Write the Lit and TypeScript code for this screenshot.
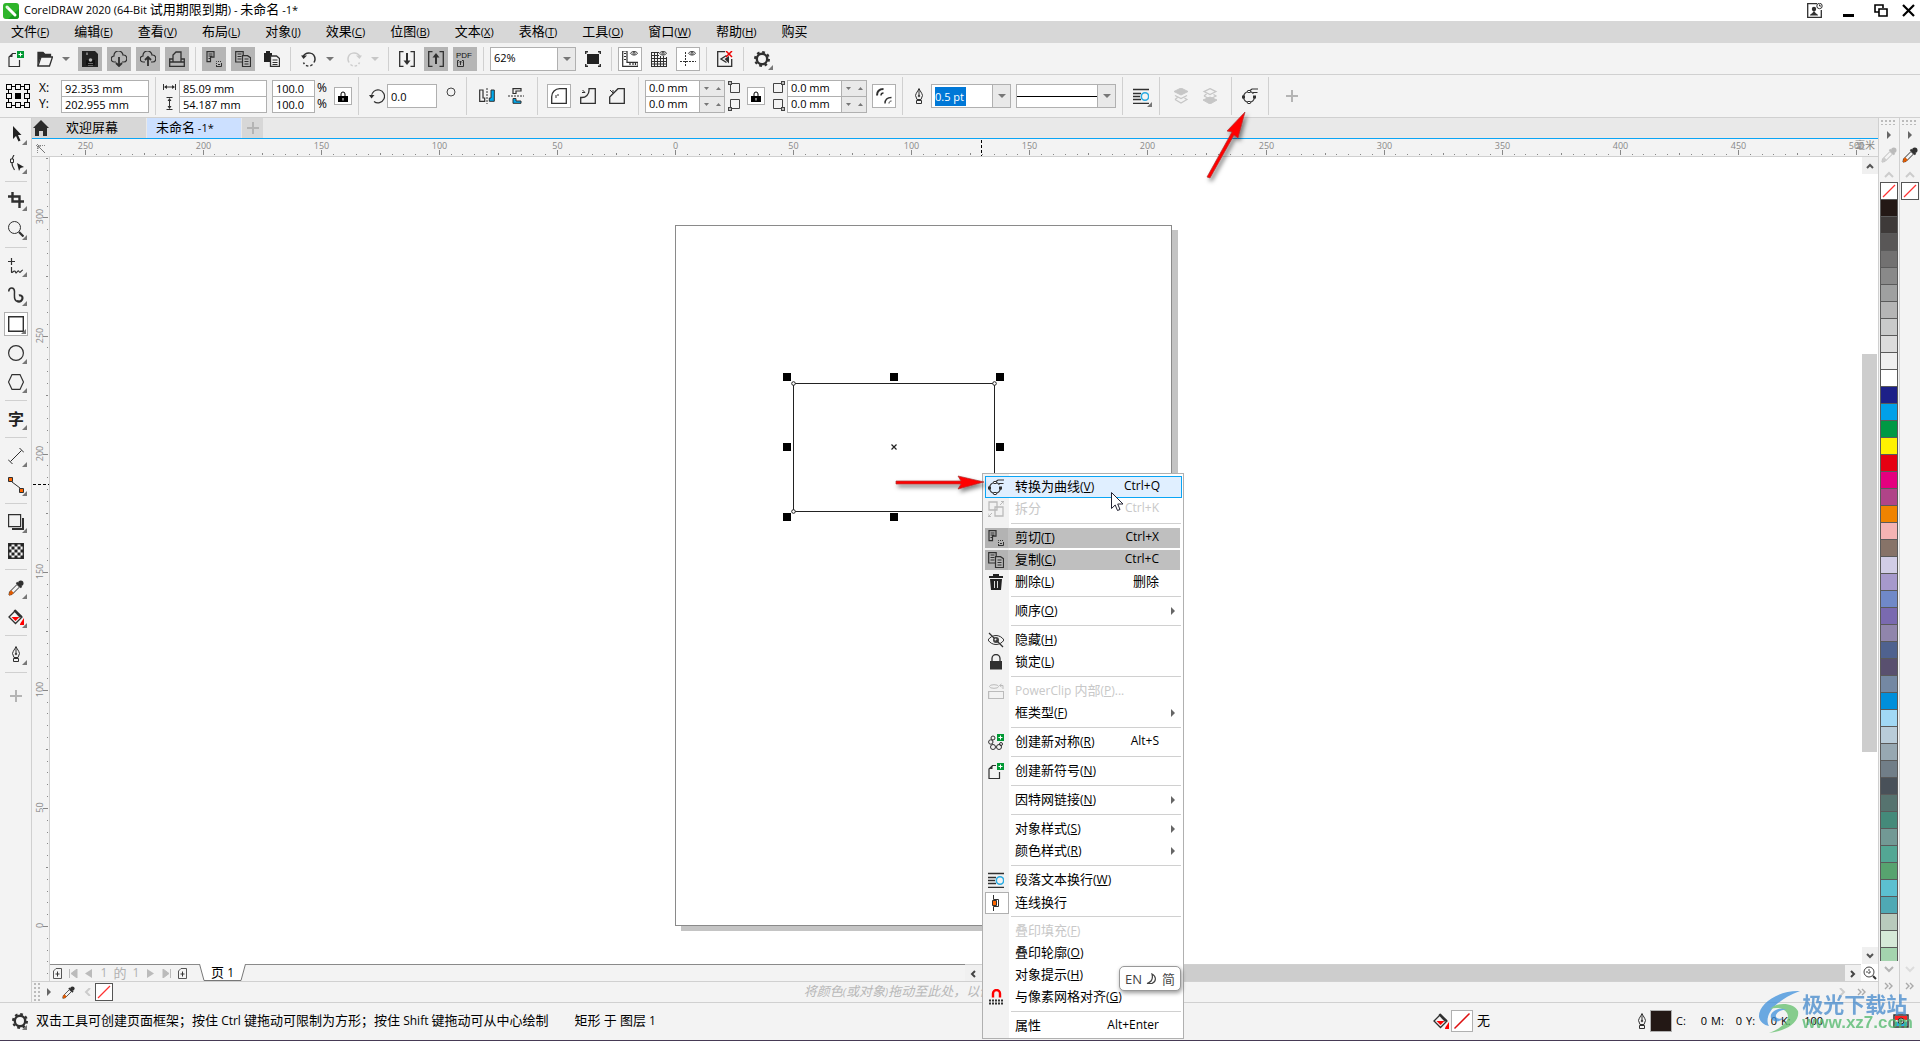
import { LitElement, html, svg, css, nothing } from "lit";
import { customElement } from "lit/decorators.js";
import { classMap } from "lit/directives/class-map.js";
import { styleMap } from "lit/directives/style-map.js";

const INK = "#303030";

/* Splits a caption into Latin and CJK runs; an underscore marks the mnemonic letter. */
const caption = (text: string) =>
  text
    .split(/([\u3000-\u9fff\uff00-\uffef]+|_[A-Z])/)
    .filter((p) => p !== "")
    .map((p) =>
      p[0] === "_"
        ? html`<u>${p.slice(1)}</u>`
        : /[\u3000-\u9fff\uff00-\uffef]/.test(p)
          ? html`<span class="cjk">${p}</span>`
          : p
    );

const draw = (content: unknown, w = 16, h = w) =>
  html`<svg width=${w} height=${h} viewBox="0 0 ${w} ${h}" fill="none" stroke=${INK} aria-hidden="true">${content}</svg>`;

const corner = svg`<path d="M5 0v5H0z" fill="#777" stroke="none"/>`;
const flyout = html`<svg class="flyout" width="5" height="5" viewBox="0 0 5 5" aria-hidden="true">${corner}</svg>`;
const caret = html`<svg width="8" height="4" viewBox="0 0 8 4" aria-hidden="true"><path d="M0 0h8L4 4z" fill="#777"/></svg>`;

const gearPath = svg`<circle cx="8" cy="8" r="5.2" stroke-width="2.4"/><circle cx="8" cy="8" r="7" stroke-width="2" stroke-dasharray="2.75 2.75"/>`;
const penPath = svg`<path d="M8 1v7M8 .5C7 3 5 5 4.500 7.500L6 11.500h4l1.500-4C11 5 9 3 8 .5zM5.500 12.500h5v3h-5z"/><circle cx="8" cy="8" r=".8"/>`;
const curvePath = svg`<circle cx="7" cy="9" r="5.500" stroke-width="1.200" stroke-dasharray="30.200 4.400" stroke-dashoffset="0"/><path d="M8 2.500 10 1h6M11 4.500h4.500" stroke-width="1.200"/><g fill="#fff"><rect x="6" y="2.500" width="2" height="2"/><rect x=".5" y="8" width="2" height="2"/><rect x="6" y="13.500" width="2" height="2"/><rect x="11.500" y="8" width="2" height="2"/></g>`;
const wrapPath = svg`<path d="M0 1.500h16M0 5.500h8M0 8.500h7M0 11.500h8M0 15.500h16" stroke-width="1.400"/><circle cx="12" cy="8.500" r="3.700" stroke="#29abe2" stroke-width="1.600"/>`;
const cutPath = svg`<path d="M1 .7h7v5.500H4.500v4.500H1zM2.500 3h4M2.500 5h4M2.500 7.500h1.500" stroke-width="1.200"/><path d="M10.500 15v-4.500h5" stroke-dasharray="1 1"/><path d="M10 15.500h5.500V12M12 13.500h2"/>`;
const copyPath = svg`<path d="M7 11H.7V.7h7.500V4M2.500 3h4M2.500 5.500h4M2.500 8h4" stroke-width="1.200"/><path d="M7.500 4.700h5l3 2v8.800h-8zM9.500 8h4M9.500 10.500h4M9.500 13h4" stroke-width="1.200"/>`;
const newPath = svg`<path d="M8 2.500H4.500l-3.500 3.500v9.500h10.500V9" stroke-width="1.200"/><path d="M1.500 6h3V2.500z" fill=${INK} stroke="none"/><path d="M9 0h7v7H9z" fill="#093" stroke="none"/><path d="M12.500 1.500v4M10.500 3.500h4" stroke="#fff"/>`;
const dropper = (tip: string, ink: string) => svg`<path d="m9 4.500 2.500 2.500L4 14.500l-3 .500.500-3z" stroke=${ink}/><path d="M1 15.500 1.500 12l1.700-1.700 2.500 2.500L4 14.500z" fill=${tip} stroke="none"/><path d="m8.500 2.500 5 5" stroke=${ink} stroke-width="2"/><circle cx="12.800" cy="3.200" r="2.700" fill=${ink} stroke="none"/>`;
const bucket = svg`<path d="m1 8 6.500-6.500L14 8l-6.500 6.500z" stroke-width="1.300"/><path d="M7 .5 14 7l-2 2-6.500-7z" fill=${INK} stroke="none"/><path d="M3.500 8h8L7.500 12z" fill="#f00" stroke="none"/><path d="M16 9v7h-4c0-2 1.500-3 4-7z" fill="#f00" stroke="none"/>`;
const lockPath = svg`<path d="M4 7V4.500a4 4 0 0 1 8 0V7" stroke-width="1.300"/><path d="M2 7h12v8.500H2z" fill=${INK} stroke="none"/>`;
const cloud = svg`<path d="M5 11H3.500a3 3 0 0 1-.5-6 4.500 4.500 0 0 1 9-1 3.500 3.500 0 0 1 .5 7H11" stroke-width="1.200"/>`;
const eye = svg`<path d="M.5 2.500C2.500-.2 6.500-.2 8.500 2.500 6.500 5.200 2.500 5.200.5 2.500z" stroke-width="1"/><circle cx="4.500" cy="2.500" r="1.200"/>`;
const plusPath = svg`<path d="M6 0v12M0 6h12" stroke="#b4b4b4" stroke-width="2"/>`;
const padlock = svg`<path d="M3 6V4a2 2 0 0 1 4 0v2" stroke="#000"/><path d="M0 6h10v6H0z" fill="#000" stroke="none"/><path d="M4.500 8h1v2.500h-1z" fill="#fff" stroke="none"/>`;

const icons: Record<string, unknown> = {
  new: draw(newPath),
  open: draw(svg`<path d="M1 15V1.500h5l2 2h5.500V6" stroke-width="1.300"/><path d="M1 1h5l2 2.500h6V6H4L1 12z" fill=${INK} stroke="none"/><path d="M4 6h11.500L12.500 15H1z" fill="#f3f3f3" stroke-width="1.300"/>`),
  save: draw(svg`<path d="M0 0h13l3 3v13H0z" fill="#222" stroke="none"/><path d="M5 1.500v2.500" stroke="#ccc"/><path d="M4 9h9v5H4z" fill="#111" stroke="none"/><circle cx="8.500" cy="9" r="1.800" fill="#b5b5b5" stroke="none"/><path d="M6 12.500h5M6 14.500h5" stroke="#666"/>`),
  cloudDown: draw(svg`${cloud}<path d="M8 6v9M5 12l3 3 3-3" stroke-width="1.800"/>`),
  cloudUp: draw(svg`${cloud}<path d="M8 15V6M5 9l3-3 3 3" stroke-width="1.800"/>`),
  print: draw(svg`<path d="M4 11V4l3-3h5v10M4 8H.7v7.300h14.600V8H12M.7 11h14.600" stroke-width="1.300"/>`),
  cut: draw(cutPath),
  copy: draw(copyPath),
  paste: draw(svg`<path d="M0 2h2V0h4v2h2v9H0z" fill="#222" stroke="none"/><path d="M6.500 5h6l3 2.500v8h-9z" fill="#f3f3f3" stroke-width="1.300"/><path d="M8.500 9h5M8.500 11.500h5M8.500 13.500h5"/>`),
  undo: draw(svg`<path d="M2 5.500C5 .5 14 .5 14 8.500c0 1-.5 2-1 3" stroke-width="1.500"/><path d="M11.500 13.500C8 16.500 4 15 2.500 11.500" stroke-width="1.500" stroke-dasharray="2.500 2"/><path d="M0 4.500h6L2.500 8z" fill=${INK} stroke="none"/>`),
  redo: draw(svg`<g stroke="#ccc"><path d="M14 5.500C11 .5 2 .5 2 8.500c0 1 .5 2 1 3" stroke-width="1.500"/><path d="M4.500 13.500C8 16.500 12 15 13.500 11.500" stroke-width="1.500" stroke-dasharray="2.500 2"/><path d="M16 4.500h-6L13.500 8z" fill="#ccc" stroke="none"/></g>`),
  import: draw(svg`<path d="M4.500.7H.7v14.600h3.800M11.500.7h3.800v14.600h-3.800" stroke-width="1.300"/><path d="M8 2v10" stroke-width="2"/><path d="M4.500 9.500h7L8 14z" fill=${INK} stroke="none"/>`),
  export: draw(svg`<path d="M4.500.7H.7v14.600h3.800M11.500.7h3.800v14.600h-3.800" stroke-width="1.300"/><path d="M8 4v9" stroke-width="2"/><path d="M4.500 6.500h7L8 2z" fill=${INK} stroke="none"/>`),
  screen: draw(svg`<path d="M3 .7H.7V3M13 .7h2.300V3M3 15.300H.7V13M13 15.300h2.300V13" stroke-width="1.400"/><path d="M2 3h12v10H2z" fill="#222" stroke="none"/>`),
  rulers: draw(svg`<path d="M.7 0v15.300H16v-4H5V0zM2 2.500h2M2 5.500h2M2 8.500h2M8 12v2M11 12v2M13.500 12v2" stroke-width="1.200"/><g transform="translate(8 0) scale(.9)">${eye}</g>`),
  grid: draw(svg`<path d="M.5 1v14.500M3.500 1v14.500M6.500 1v14.500M9.500 5v10.500M12.500 5v10.500M15.500 6v9.500M0 1.500h8M0 4.500h8M0 7.500h16M0 10.500h16M0 13h16M0 15.500h16"/><g transform="translate(8 0) scale(.9)">${eye}</g>`),
  guides: draw(svg`<path d="M5.500 1v15" stroke-dasharray="2 1"/><path d="M0 10.500h16" stroke-dasharray="2 1"/><g transform="translate(8 0) scale(.9)">${eye}</g>`),
  snap: draw(svg`<path d="M8 .7H.7v14.600h14V8" stroke-width="1.300"/><path d="M9.500 4.500 4 8l5.500 3.500"  stroke-width="1.400"/><path d="M7.500 8 12 5v7.500z" fill=${INK} stroke="none"/><path d="m9 0 6 6M15 0 9 6" stroke="#e00" stroke-width="1.500"/>`),
  gear: draw(gearPath),
  pick: draw(svg`<path d="M5 0v13l3-3 2.500 5.500 2-1L10 9h3.500z" fill="#222" stroke="none"/>`),
  shape: draw(svg`<path d="M6 0C3 4 3 10 6.500 15" stroke-width="1.200"/><path d="M2.500 4h3v3.500h-3z" fill="#f3f3f3"/><path d="m9 8 7 4-3.500 1-1.500 3z" fill="#222" stroke="none"/>`),
  crop: draw(svg`<path d="M4.500 0v9.500H16M0 4.500h11.500V16" stroke-width="2.400"/>`),
  zoom: draw(svg`<circle cx="6.500" cy="6.500" r="6"/><path d="m11 11 4.500 4.500" stroke-width="2.200"/>`),
  freehand: draw(svg`<path d="M3.500 0v7M0 3.500h7M3.500 9v5c0 2 3-3 4 0s2-3 3.500-.5 2-1.500 4-1.500" stroke-width="1.200"/>`),
  media: draw(svg`<path d="M.7 4.500C1-.5 6.500 0 6.500 4.500S5.500 14.500 10.500 14.500" stroke-width="1.500"/><path d="M9 14c3 1.500 5.500-.5 5.500-3S12 8 11 8.500" stroke-width="2.200"/>`),
  rect: draw(svg`<path d="M.7.7h14.600v14.600H.7z" stroke-width="1.400"/>`),
  ellipse: draw(svg`<circle cx="8" cy="8" r="7.400" stroke-width="1.200"/>`),
  polygon: draw(svg`<path d="M4 .6h8L15.500 8 12 15.400H4L.5 8z" stroke-width="1.200"/>`),
  line: draw(svg`<path d="M2.500 13.500l11-11M0 11.500l4.500 4.500M11.500 0l4.500 4.500"/>`),
  connector: draw(svg`<path d="m4 5 8 6" /><path d="M.5.5h4v4h-4zM11.500 11.500h4v4h-4z" fill="#f60" stroke-width="1"/>`),
  shadow: draw(svg`<path d="M.6.6h12v12H.6z" stroke-width="1.200"/><path d="M15 4v11H4" stroke-width="2"/>`),
  checker: draw(svg`<path d="M.7.7h14.600v14.600H.7z" stroke-width="1.400"/>${[0, 1, 2, 3, 4].flatMap((r) => [0, 1, 2, 3, 4].filter((c) => (r + c) % 2 === 0).map((c) => svg`<rect x=${0.5 + c * 3} y=${0.5 + r * 3} width="3" height="3" fill="#222" stroke="none"/>`))}`),
  dropper: draw(dropper("#e05a00", INK)),
  dropperPale: draw(dropper("#ccc", "#bbb")),
  dropperSmall: html`<svg width="13" height="13" viewBox="0 0 16 16" fill="none" aria-hidden="true">${dropper("#e05a00", INK)}</svg>`,
  bucket: draw(bucket),
  pen: draw(penPath),
  plus: draw(plusPath, 12),
  origin: draw(svg`<path d="M2.500 2.500h19v19h-19z" stroke="#000"/>${[0, 9, 18].flatMap((y) => [0, 9, 18].map((x) => svg`<rect x=${x + 0.5} y=${y + 0.5} width="5" height="5" fill=${x === 9 && y === 9 ? "#000" : "#f3f3f3"} stroke="#000"/>`))}`, 24),
  widthDim: draw(svg`<path d="M.5 1v6M12.500 1v6M2 4h9"/><path d="M1 4l3-2v4zM12 4 9 2v4z" fill=${INK} stroke="none"/>`, 13, 8),
  heightDim: draw(svg`<path d="M3.500.5h6M3.500 12.500h6M6.500 2v9"/><path d="m6.500 1 2 3h-4zM6.500 12l2-3h-4z" fill=${INK} stroke="none"/>`, 13),
  lock: draw(padlock, 10, 12),
  rotate: draw(svg`<path d="M2.500 8.500a6.500 6.500 0 1 1 2.500 5" stroke-width="1.200"/><path d="M0 7h5.500L2.500 10.500z" fill=${INK} stroke="none"/>`),
  degree: draw(svg`<circle cx="5" cy="5" r="4" stroke="#444"/>`, 10),
  mirrorH: draw(svg`<path d="M.7 2v11.300h5V10H4V2z" stroke-width="1.200"/><path d="M8 0v16" stroke-dasharray="2 1"/><path d="M15.300 2v11.300h-5V10H12V2z" fill="#0ae" stroke-width="1"/>`),
  mirrorV: draw(svg`<path d="M5 5.500V.7h8V3H8v2.500z" stroke-width="1.200"/><path d="M0 8h16" stroke-dasharray="2 1"/><path d="M5 10.500v4.800h8V13H8v-2.500z" fill="#0ae" stroke-width="1"/>`),
  round: draw(svg`<path d="M.7 15.300V9A8 8 0 0 1 9 .7h6.300v14.600z" stroke-width="1.300"/><path d="M5 10V7h3" stroke-dasharray="3 1"/>`),
  scallop: draw(svg`<path d="M.7 15.300V9.500H2A7 7 0 0 0 9 2.500V.7h6.300v14.600z" stroke-width="1.300"/><path d="M2 4.500h3L2.500 2"/>`),
  chamfer: draw(svg`<path d="M.7 15.300V9L9 .7h6.300v14.600z" stroke-width="1.300"/><path d="m1 2 3 3V2"/>`),
  relative: draw(svg`<path d="M1 7.500C1 3 3 1 7.500 1" stroke-width="2"/><path d="M5 7.500C5 6 6 5 7.500 5M9 15.500C9 11 11 9.500 15.500 9.500" stroke-width="1.400"/><path d="M13 15.500c0-1.500 1-2.500 2.500-2.500"/>`),
  wrap: draw(wrapPath),
  toFront: draw(svg`<g stroke="#c6c6c6"><path d="M8 0l7 3.500L8 7 1 3.500z" fill="#c6c6c6"/><path d="m2 7.500 6 3 6-3M2 11.500l6 3.500 6-3.500-2.500-1.500M4.500 9.500 2 11.500" stroke-width="1.200"/></g>`),
  toBack: draw(svg`<g stroke="#c6c6c6"><path d="M8 9l7 3-7 4-7-4z" fill="#c6c6c6"/><path d="M8 .6l6 3-6 3-6-3zM2 8l6 3 6-3-2.500-1.500M4.500 6 2 8" stroke-width="1.200"/></g>`),
  curve: draw(curvePath),
  split: draw(svg`<g stroke="#bbb"><path d="M1 1h8v8H1zM7 6h8v9H7z" stroke-width="1.300"/><path d="M12 4l4-4M13 .500h3v3M4 12l-4 4M3 15.500H0v-3"/></g>`),
  trash: draw(svg`<path d="M1 2h4V0h6v2h4v2H1zM2 5h12l-1 11H3z" fill="#222" stroke="none"/><path d="M6.500 7v7M9.500 7v7" stroke="#ddd"/>`),
  hide: draw(svg`<path d="M0 8c4-6 12-6 16 0-4 6-12 6-16 0z"/><circle cx="8" cy="8" r="3" fill="#444" stroke="none"/><path d="m1 1 14 14" stroke-width="1.200"/><circle cx="7.500" cy="7.500" r="1" fill="#eee" stroke="none"/>`),
  padlock: draw(lockPath),
  clip: draw(svg`<g stroke="#bbb"><path d="M.6 8.500h15v7H.6z" stroke-width="1.200"/><ellipse cx="6" cy="3.500" rx="4.500" ry="1.800"/><path d="M12 2.500h3V6M13.500 1l-2 1.500 2 1.500"/></g>`),
  symmetry: draw(svg`<g><circle cx="5" cy="4" r="2"/><circle cx="2.800" cy="8" r="2.200"/><circle cx="5" cy="13" r="2.500"/><circle cx="11" cy="13" r="2.500"/><circle cx="13" cy="10" r="1.500"/></g><path d="M9 0h7v7H9z" fill="#093" stroke="none"/><path d="M12.500 1.500v4M10.500 3.500h4" stroke="#fff"/>`),
  connWrap: draw(svg`<path d="M5.500 0v4.500h5v7h-5V16"/><path d="M4.500 5.500h4v5h-4z" fill="#f60"/>`),
  magnet: draw(svg`<path d="M5 8.500V4.500a3.500 3.500 0 0 1 7 0v4" stroke="#f00" stroke-width="2.400"/><path d="M1 11.500h14M1 14.500h14" stroke-width="2" stroke-dasharray="2 1"/>`),
  home: draw(svg`<path d="M8 0l8 8h-2v8h-4v-5H6v5H2V8H0z" fill="#2b2b2b" stroke="none"/>`),
  chevUp: draw(svg`<path d="m1 6 4-4 4 4" stroke="#ccc" stroke-width="2"/>`, 10, 8),
  chevDown: draw(svg`<path d="m1 2 4 4 4-4" stroke="#b4b4b4" stroke-width="2"/>`, 10, 8),
  scrollUp: draw(svg`<path d="m1 6 3-3 3 3" stroke="#555" stroke-width="2"/>`, 8),
  scrollDown: draw(svg`<path d="m1 2 3 3 3-3" stroke="#555" stroke-width="2"/>`, 8),
  scrollLeft: draw(svg`<path d="m6 1-3 3 3 3" stroke="#444" stroke-width="2"/>`, 8),
  scrollRight: draw(svg`<path d="m2 1 3 3-3 3" stroke="#444" stroke-width="2"/>`, 8),
  leftPale: draw(svg`<path d="m6 0-4 4 4 4" stroke="#ccc" stroke-width="2"/>`, 8),
  rightPale: draw(svg`<path d="m2 0 4 4-4 4" stroke="#ccc" stroke-width="2"/>`, 8),
  more: draw(svg`<path d="m1 1 3 3-3 3M5 1l3 3-3 3" stroke="#aaa" stroke-width="1.400"/>`, 10, 8),
  play: draw(svg`<path d="M0 0l4 4-4 4z" fill="#666" stroke="none"/>`, 4, 8),
  navigator: draw(svg`<circle cx="6" cy="6" r="5" stroke="#444"/><path d="m10 10 3 3" stroke="#333" stroke-width="2"/><path d="M3 6h6M6 3v6" stroke="#444" stroke-dasharray="2 1"/>`, 14),
  rulerOrigin: draw(svg`<path d="M0 1.500h9M1.500 0v9" stroke="#888" stroke-dasharray="1 1"/><path d="m2 2 7 7M2 5V2h3" stroke="#777"/>`, 10),
  addPage: draw(svg`<path d="M3 .5h5.500v10h-8V3z" stroke="#555"/><path d="M4.500 3.500v5M2.500 6h4" stroke="#333"/>`, 9, 11),
  first: draw(svg`<path d="M.5 0v9M8 0v9L2 4.500z" fill="#bbb" stroke="#bbb"/>`, 9),
  prev: draw(svg`<path d="M7 0v9L0 4.500z" fill="#bbb" stroke="none"/>`, 8, 9),
  next: draw(svg`<path d="M0 0v9l7-4.500z" fill="#bbb" stroke="none"/>`, 8, 9),
  last: draw(svg`<path d="M8.500 0v9M1 0v9l6-4.500z" fill="#bbb" stroke="#bbb"/>`, 9),
  account: draw(svg`<path d="M10 .7H.7v13.600h13.600V7" stroke-width="1.300"/><circle cx="7" cy="6" r="2.200" fill=${INK} stroke="none"/><path d="M3 12.500c0-2 3-1.500 3-4h2c0 2.500 3 2 3 4z" fill=${INK} stroke="none"/><circle cx="12.500" cy="3" r="2.700" fill="#fff"/><path d="M12.500 1.500V3H14"/>`),
  minimize: draw(svg`<path d="M0 12.500h11" stroke="#000" stroke-width="3"/>`, 11, 16),
  restore: draw(svg`<path d="M5 8H1V1h8v3M5 5h8v7H5z" stroke="#000" stroke-width="1.600"/>`, 14, 13),
  close: draw(svg`<path d="M1 1l11 11M12 1 1 12" stroke="#000" stroke-width="2.200"/>`, 13),
  proof: draw(svg`<path d="M1 1h14v12H1z" fill="#fff" stroke-width="1.500"/><path d="M2 2h12v4H2z" fill="#f22" stroke="none"/><path d="M2 8h12v4H2z" fill="#29abe2" stroke="none"/><circle cx="8" cy="7" r="3" fill="#ccc"/><circle cx="8" cy="7" r="1"/>`, 16, 14),
};

const cornerIcon = (x: number, y: number) =>
  draw(svg`<path d="M2.500 2.500h9v9h-9z" stroke="#444"/><rect x=${x} y=${y} width="3" height="3" fill="#bbb" stroke="#444"/>`, 14);

const menus = ["文件(_F)", "编辑(_E)", "查看(_V)", "布局(_L)", "对象(_J)", "效果(_C)", "位图(_B)", "文本(_X)", "表格(_T)", "工具(_O)", "窗口(_W)", "帮助(_H)", "购买"];

type Tool = { icon: string; label: string; on?: boolean; fly?: boolean } | "-";
const tools: Tool[] = [
  { icon: "pick", label: "选择", fly: true }, { icon: "shape", label: "形状", fly: true }, "-",
  { icon: "crop", label: "裁剪", fly: true }, { icon: "zoom", label: "缩放", fly: true }, "-",
  { icon: "freehand", label: "手绘", fly: true }, { icon: "media", label: "艺术笔", fly: true },
  { icon: "rect", label: "矩形", on: true, fly: true }, { icon: "ellipse", label: "椭圆形", fly: true }, { icon: "polygon", label: "多边形", fly: true }, "-",
  { icon: "text", label: "文本", fly: true }, "-",
  { icon: "line", label: "平行度量", fly: true }, { icon: "connector", label: "连接器", fly: true }, "-",
  { icon: "shadow", label: "阴影", fly: true }, { icon: "checker", label: "透明度" }, "-",
  { icon: "dropper", label: "颜色滴管", fly: true }, { icon: "bucket", label: "交互式填充", fly: true }, "-",
  { icon: "pen", label: "轮廓笔", fly: true }, "-",
];

type Item = { text: string; key?: string; icon?: string; sub?: boolean; state?: "hot" | "off" | "dim" | "boxed" } | "-";
const contextItems: Item[] = [
  { text: "转换为曲线(_V)", key: "Ctrl+Q", icon: "curve", state: "hot" },
  { text: "拆分", key: "Ctrl+K", icon: "split", state: "off" }, "-",
  { text: "剪切(_T)", key: "Ctrl+X", icon: "cut", state: "dim" },
  { text: "复制(_C)", key: "Ctrl+C", icon: "copy", state: "dim" },
  { text: "删除(_L)", key: "删除", icon: "trash" }, "-",
  { text: "顺序(_O)", sub: true }, "-",
  { text: "隐藏(_H)", icon: "hide" },
  { text: "锁定(_L)", icon: "padlock" }, "-",
  { text: "PowerClip 内部(_P)...", icon: "clip", state: "off" },
  { text: "框类型(_F)", sub: true }, "-",
  { text: "创建新对称(_R)", key: "Alt+S", icon: "symmetry" }, "-",
  { text: "创建新符号(_N)", icon: "new" }, "-",
  { text: "因特网链接(_N)", sub: true }, "-",
  { text: "对象样式(_S)", sub: true },
  { text: "颜色样式(_R)", sub: true }, "-",
  { text: "段落文本换行(_W)", icon: "wrap" },
  { text: "连线换行", icon: "connWrap", state: "boxed" }, "-",
  { text: "叠印填充(_F)", state: "off" },
  { text: "叠印轮廓(_O)" },
  { text: "对象提示(_H)" },
  { text: "与像素网格对齐(_G)", icon: "magnet" }, "-",
  { text: "属性", key: "Alt+Enter" },
];

const swatches = ["#231815", "#3e3a39", "#595757", "#727171", "#898989", "#9fa0a0", "#b5b5b5", "#c9caca", "#dcdcdc", "#efefef", "#ffffff", "#1d2088", "#00a0e9", "#009944", "#fff100", "#e60012", "#e4007f", "#b04488", "#f08300", "#f4b3b3", "#877368", "#d1cde6", "#a699cc", "#7089c8", "#7a6ab0", "#9085ac", "#4f628f", "#59506f", "#7488a3", "#008fdb", "#a1d8f5", "#b9ccd9", "#97a8b2", "#717e88", "#495159", "#56736f", "#448a7a", "#729995", "#53a794", "#57a36f", "#5cc0d0", "#4fa9b4", "#b8cabc", "#d6e9d8", "#a4d4ae"];

const inks: [string, string][] = [["C:", "0"], ["M:", "0"], ["Y:", "0"], ["K:", "100"]];

const PX_PER_MM = 2.362;
const range = (from: number, to: number, step: number) =>
  Array.from({ length: Math.floor((to - from) / step) + 1 }, (_, i) => from + i * step);

@customElement("app-root")
export class AppRoot extends LitElement {
  static styles = css`
    :host { display: block; --line: #d0d0d0; --box: #b0b0b0; --face: #f3f3f3; }
    * { box-sizing: border-box; }
    button, input, select { font: inherit; color: inherit; border: 0; padding: 0; margin: 0; background: none; border-radius: 0; outline: none; }
    button { display: flex; align-items: center; justify-content: center; }
    select { appearance: none; }
    svg { display: block; flex: none; }
    u { text-underline-offset: 1px; }
    .cjk { font-size: 13px; }
    .app { position: relative; display: flex; flex-direction: column; height: 100vh; overflow: hidden; background: var(--face); color: #000; font: 11px/16px "Open Sans", "Noto Sans CJK SC", sans-serif; white-space: nowrap; }
    .title { display: flex; align-items: center; height: 21px; padding: 0 5px 0 3px; background: #fff; gap: 5px; }
    .title h1 { flex: 1; margin: 0; padding-bottom: 2px; font: inherit; }
    .winbtns { display: flex; gap: 14px; align-items: center; }
    .winbtns .lone { padding-right: 6px; }
    .menubar { display: flex; height: 22px; background: #d7d7d7; }
    .menubar button { padding: 0 14px 2px 11px; }
    .bar { display: flex; align-items: center; gap: 5px; border-bottom: 1px solid var(--line); }
    .main { height: 32px; padding-left: 4px; }
    .props { height: 43px; padding-left: 6px; }
    .ib { position: relative; width: 24px; height: 24px; flex: none; }
    .dark { background: #b5b5b5; }
    .boxed { background: #fff; border: 1px solid var(--box); }
    .flyout { position: absolute; right: 1px; bottom: 1px; }
    .drop { width: 11px; height: 24px; justify-content: flex-start; }
    .pale { opacity: .35; }
    .vsep { width: 3px; height: 24px; flex: none; padding: 0 1px; background: var(--line); background-clip: content-box; }
    .props .vsep { height: 38px; }
    .combo { display: flex; height: 24px; border: 1px solid var(--box); background: #fff; align-items: center; }
    .combo .well { display: flex; align-items: center; justify-content: center; width: 18px; height: 22px; border-left: 1px solid var(--box); background: #e9e9e9; }
    .combo .grow { flex: 1; min-width: 0; }
    .combo select { padding: 0 0 2px 3px; height: 22px; }
    .zoomc { width: 86px; }
    .widthc { width: 80px; }
    .linec { width: 100px; }
    .picked { width: 31px; height: 19px; margin-left: 3px; background: #0078d7; color: #fff; }
    .fill { flex: 1; }
    .rule { flex: 1; height: 1px; background: #000; }
    .group { display: flex; align-items: center; gap: 2px; }
    .btns { display: flex; gap: 5px; padding: 0 3px; }
    .btns.tight { padding-left: 2px; }
    .stack { display: flex; flex-direction: column; }
    .stack input { width: 88px; height: 17px; border: 1px solid var(--box); background: #fff; padding: 0 3px; }
    .stack input + input, .stack .spin + .spin { margin-top: -1px; }
    .stack .pct { width: 43px; }
    .labels { width: 21px; padding-left: 4px; font-size: 12px; }
    .unit { width: 12px; font-size: 12px; }
    .icons { width: 15px; align-items: center; gap: 2px; justify-content: center; }
    .icons.dims { gap: 6px; }
    .spin { display: flex; width: 80px; height: 17px; border: 1px solid var(--box); background: #e9e9e9; }
    .stack .spin input { width: 54px; height: 15px; border: 0; border-right: 1px solid var(--box); }
    .spin button { width: 12px; }
    .lock { width: 18px; height: 18px; flex: none; }
    .angle { width: 50px; height: 24px; background: #fff; border: 1px solid var(--box); padding: 0 3px; }
    .lead { width: 20px; display: flex; justify-content: flex-end; }
    .lead.mid { justify-content: center; }
    .degree { width: 18px; height: 18px; display: flex; justify-content: center; }
    .wide { width: 34px; }
    .body { flex: 1; min-height: 0; display: grid; grid-template-columns: 32px minmax(0, 1fr) 21px 21px; border-bottom: 1px solid var(--line); }
    .toolbox { display: flex; flex-direction: column; gap: 5px; padding: 4px 0 0 4px; border-right: 1px solid var(--line); min-height: 0; overflow: hidden; }
    .hsep { width: 22px; height: 3px; flex: none; margin-left: 1px; padding: 1px 0; background: var(--line); background-clip: content-box; }
    .glyph { font: 700 16px/20px "Noto Sans CJK SC", sans-serif; color: #222; padding-bottom: 2px; }
    .add { width: 24px; height: 34px; }
    .doc { display: flex; flex-direction: column; min-height: 0; }
    .tabs { display: flex; height: 21px; background: #e9e9e9; border-bottom: 1px solid #0ba5f5; gap: 1px; }
    .tab { padding: 0; background: #d7d7d7; }
    .tab span { padding-bottom: 2px; }
    .tab.first { width: 114px; justify-content: flex-start; gap: 17px; padding-left: 1px; }
    .tab.current { width: 94px; background: #cce0ff; justify-content: flex-start; padding-left: 9px; }
    .tab.more { width: 21px; }
    .hrow { display: flex; height: 18px; border-bottom: 1px solid var(--line); }
    .origin { width: 18px; flex: none; padding: 5px 0 0 4px; }
    .ruler { flex: 1; min-width: 0; overflow: hidden; font-size: 9px; }
    .below { flex: 1; min-height: 0; display: flex; }
    .vruler { width: 18px; border-right: 1px solid var(--line); overflow: hidden; font-size: 9px; min-height: 0; }
    .work { flex: 1; min-width: 0; display: flex; flex-direction: column; }
    .view { flex: 1; min-height: 0; display: flex; background: #fff; }
    .canvas { flex: 1; min-width: 0; overflow: hidden; }
    .vscroll { width: 16px; display: flex; flex-direction: column; }
    .sbtn { width: 16px; height: 17px; flex: none; background: #f0f0f0; }
    .track { flex: 1; display: flex; flex-direction: column; padding-right: 1px; }
    .s180 { flex: 180; } .s195 { flex: 195; }
    .thumb { flex: 398; background: #cdcdcd; }
    .pages { display: flex; height: 17px; }
    .pagenav { flex: 914; display: flex; align-items: center; gap: 7px; padding-left: 3px; border-top: 1px solid #8a8a8a; color: #b0b0b0; font-size: 12px; }
    .count { display: flex; justify-content: center; gap: 6px; width: 40px; }
    .ptab { position: relative; width: 47px; height: 17px; color: #000; align-self: flex-end; margin-left: 5px; }
    .ptab svg { position: absolute; left: 0; top: 0; }
    .ptab span { position: relative; padding-bottom: 1px; }
    .hscroll { flex: 897; display: flex; border-top: 1px solid var(--line); }
    .hthumb { flex: 1; background: #cdcdcd; margin-left: 4px; }
    .navzoom { width: 17px; background: #fff; }
    .docpal { display: flex; align-items: center; height: 21px; border-top: 1px solid var(--line); padding: 0 6px 0 2px; }
    .dots { width: 7px; height: 18px; flex: none; background: radial-gradient(circle at 1px 1px, #bbb 1px, transparent 1px) 0 0 / 4px 4px; }
    .dots.flat { width: 16px; height: 5px; margin: 2px 0 2px 1px; }
    .docpal button { width: 20px; height: 20px; }
    .docpal .slim { width: 15px; }
    .docpal .wider { width: 24px; }
    .docpal .none { width: 18px; height: 18px; }
    .hint { flex: 1; text-align: center; font-style: italic; color: #b8b8b8; padding: 0 0 2px 20px; }
    .none { width: 18px; height: 18px; flex: none; background: #fff; border: 1px solid #555; }
    .pal { display: flex; flex-direction: column; border-left: 1px solid var(--line); min-height: 0; padding: 0 1px 6px; }
    .pal button { flex: none; width: 18px; }
    .h15 { height: 15px; } .h16 { height: 16px; } .h20 { height: 20px; } .h24 { height: 24px; }
    .list { flex: 1; min-height: 0; overflow: hidden; }
    .list button { height: 17px; border: 1px solid #5a5a5a; border-top: 0; }
    .pal .none { height: 18px; }
    .status { display: flex; align-items: center; height: 38px; padding: 0 11px 2px; border-bottom: 1px solid #463a55; font-size: 12px; }
    .status .ib { width: 17px; height: 20px; margin-right: 8px; }
    .hintline { margin: 0 26px 0 0; }
    .push { flex: 1; }
    .stat { display: flex; align-items: center; }
    .fillstat { width: 201px; gap: 2px; }
    .penstat { width: 259px; }
    .chip { width: 22px; height: 22px; border: 1px solid var(--box); background: #fff; margin-right: 2px; }
    .chip.k { background: #231815; margin-right: 4px; }
    .cmyk { display: flex; gap: 4px; font-size: 11px; }
    .ink { display: flex; justify-content: space-between; width: 31px; }
    .ink:last-child { width: 42px; }
    .menu { position: absolute; left: 982px; top: 473px; width: 202px; padding: 2px 2px 1px 1px; border: 1px solid var(--box); background: linear-gradient(90deg, #f2f2f2 26px, #fff 26px); font-size: 12px; }
    .menu button { display: grid; grid-template-columns: 29px 1fr auto 19px; align-items: center; width: 100%; height: 22px; text-align: left; padding: 0 2px 0 1px; border: 1px solid transparent; }
    .menu .cap { padding-bottom: 2px; }
    .menu .pic { padding-left: 2px; }
    .menu .sub { padding-left: 12px; }
    .menu .hot { background: #e0efff; border-color: #0aa5f5; margin-left: 1px; width: 197px; padding-left: 0; }
    .menu .off { color: #c8c8c8; }
    .menu .dim { background: linear-gradient(90deg, #b3b3b3 23px, #bfbfbf 23px) padding-box; }
    .menu .held .pic { border: 1px solid var(--box); background: #fff; width: 24px; height: 22px; margin-left: -1px; padding: 2px 0 0 2px; }
    .msep { height: 7px; padding: 3px 0; margin-left: 27px; background: var(--line); background-clip: content-box; }
    .over { position: absolute; pointer-events: none; }
    .cursor { left: 1111px; top: 492px; }
    .arrow1 { left: 1200px; top: 106px; }
    .arrow2 { left: 890px; top: 468px; }
    .ime { position: absolute; left: 1119px; top: 966px; width: 62px; height: 25px; display: flex; align-items: center; justify-content: center; gap: 4px; border: 1px solid #999; border-radius: 5px; background: #fff; box-shadow: 1px 2px 4px #0006; color: #444; font-size: 13px; }
    .mark { position: absolute; right: 7px; bottom: 7px; display: flex; align-items: center; opacity: .75; }
    .mark svg { margin-right: -3px; }
    .mark p { margin: 0; padding-left: 3px; font: 700 21px/22px "Noto Sans CJK SC", sans-serif; color: #4489cc; }
    .mark p + p { font: 700 17px/18px "Liberation Sans", sans-serif; color: #4fb86a; }
  `;

  private sep = html`<span class="vsep"></span>`;

  private btn(icon: string, label: string, cls = "", fly = false) {
    return html`<button class="ib ${cls}" aria-label=${label}>${icons[icon]}${fly ? flyout : nothing}</button>`;
  }

  private mainBar() {
    const drop = (label: string, pale = false) =>
      html`<button class=${classMap({ drop: true, pale })} aria-label=${label}>${caret}</button>`;
    return html`<div class="bar main" role="toolbar" aria-label="标准">
      ${this.btn("new", "新建")}${this.btn("open", "打开")}${drop("最近的文件")}
      ${this.btn("save", "保存", "dark")}${this.btn("cloudDown", "从云中打开", "dark")}${this.btn("cloudUp", "保存到云", "dark")}${this.btn("print", "打印", "dark")}
      ${this.sep}${this.btn("cut", "剪切", "dark")}${this.btn("copy", "复制", "dark")}${this.btn("paste", "粘贴")}
      ${this.sep}${this.btn("undo", "撤消")}${drop("撤消列表")}${this.btn("redo", "重做")}${drop("重做列表", true)}
      ${this.sep}${this.btn("import", "导入")}${this.btn("export", "导出", "dark")}
      <button class="ib dark" aria-label="发布为 PDF">${draw(svg`<text x="0" y="7" font-size="8" fill="#111" stroke="none" font-family="Liberation Sans">PDF</text><path d="M3 9.500H1.500v6h6v-6H6M4.500 14v-4M3 11.500 4.500 10 6 11.500"/>`, 18, 16)}</button>
      ${this.sep}
      <div class="combo zoomc"><select class="grow" aria-label="缩放级别"><option>62%</option><option>100%</option></select><span class="well">${caret}</span></div>
      ${this.btn("screen", "全屏预览")}${this.sep}
      ${this.btn("rulers", "显示标尺", "boxed")}${this.btn("grid", "显示网格")}${this.btn("guides", "显示辅助线", "boxed")}
      ${this.sep}${this.btn("snap", "贴齐关闭")}${this.sep}${this.btn("gear", "选项", "", true)}
    </div>`;
  }

  private spin(label: string) {
    return html`<div class="spin"><input aria-label=${label} value="0.0 mm" /><button aria-label="减小 ${label}">${draw(svg`<path d="M0 0h5L2.500 3z" fill="#777" stroke="none"/>`, 5, 3)}</button><button aria-label="增大 ${label}">${draw(svg`<path d="M0 3h5L2.500 0z" fill="#777" stroke="none"/>`, 5, 3)}</button></div>`;
  }

  private propertyBar() {
    return html`<div class="bar props" role="toolbar" aria-label="属性栏">
      ${this.btn("origin", "对象原点")}
      <div class="stack labels"><label for="px">X:</label><label for="py">Y:</label></div>
      <div class="stack"><input id="px" value="92.353 mm" /><input id="py" value="202.955 mm" /></div>
      ${this.sep}
      <div class="group"><div class="stack icons dims">${icons.widthDim}${icons.heightDim}</div>
        <div class="stack"><input aria-label="宽度" value="85.09 mm" /><input aria-label="高度" value="54.187 mm" /></div></div>
      <div class="group"><div class="stack"><input class="pct" aria-label="水平缩放" value="100.0" /><input class="pct" aria-label="垂直缩放" value="100.0" /></div>
        <div class="stack unit"><span>%</span><span>%</span></div></div>
      <button class="lock boxed" aria-label="锁定比率">${icons.lock}</button>
      ${this.sep}
      <div class="group"><label for="ang" class="lead">${icons.rotate}</label><input id="ang" class="angle" aria-label="旋转角度" value="0.0" /></div>
      <span class="degree">${icons.degree}</span>
      ${this.sep}
      <div class="btns tight">${this.btn("mirrorH", "水平镜像")}${this.btn("mirrorV", "垂直镜像")}</div>
      ${this.sep}
      <div class="btns">${this.btn("round", "圆角", "boxed")}${this.btn("scallop", "扇形角")}${this.btn("chamfer", "倒棱角")}</div>
      ${this.sep}
      <div class="group"><div class="stack">${this.spin("左上角")}${this.spin("左下角")}</div><div class="stack icons">${cornerIcon(0.5, 0.5)}${cornerIcon(0.5, 10.5)}</div></div>
      <button class="lock boxed" aria-label="同时编辑所有角">${icons.lock}</button>
      <div class="group"><div class="stack icons">${cornerIcon(10.5, 0.5)}${cornerIcon(10.5, 10.5)}</div><div class="stack">${this.spin("右上角")}${this.spin("右下角")}</div></div>
      ${this.btn("relative", "相对角缩放", "boxed")}
      ${this.sep}
      <div class="group"><label for="ow" class="lead mid">${icons.pen}</label>
        <div class="combo widthc"><input id="ow" class="picked" aria-label="轮廓宽度" value="0.5 pt" /><span class="fill"></span><span class="well">${caret}</span></div></div>
      <button class="combo linec" aria-label="线条样式"><span class="rule"></span><span class="well">${caret}</span></button>
      ${this.sep}${this.btn("wrap", "文本换行", "", true)}${this.sep}
      <div class="btns">${this.btn("toFront", "到图层前面")}${this.btn("toBack", "到图层后面")}</div>
      ${this.sep}${this.btn("curve", "转换为曲线")}${this.sep}
      ${this.btn("plus", "快速自定义", "wide")}
    </div>`;
  }

  private hRuler() {
    const at = (mm: number) => Math.floor(625.5 + mm * PX_PER_MM) + 0.5;
    return html`<svg class="ruler" height="17" fill="#888" stroke="#888" role="img" aria-label="水平标尺">
      ${range(-265, 515, 5).map((mm) => {
        const x = at(mm);
        const top = mm % 50 === 0 ? 11 : mm % 25 === 0 ? 14 : 15;
        return svg`<path d="M${x} ${top}V16"/>${mm % 50 === 0 ? svg`<text x=${x} y="10" text-anchor="middle" stroke="none">${Math.abs(mm)}</text>` : nothing}`;
      })}
      <path d="M931.500 1v16" stroke="#000" stroke-dasharray="3 2" />
      <text x="100%" dx="-23" y="10" stroke="none" font-size="10">毫米</text>
    </svg>`;
  }

  private vRuler() {
    const at = (mm: number) => Math.floor(769.5 - mm * PX_PER_MM) + 0.5;
    return html`<svg width="17" height="824" fill="#888" stroke="#888" role="img" aria-label="垂直标尺">
      ${range(-20, 325, 5).map((mm) => {
        const y = at(mm);
        const left = mm % 50 === 0 ? 11 : mm % 25 === 0 ? 14 : 15;
        return svg`<path d="M${left} ${y}H16"/>${mm % 50 === 0 ? svg`<text transform="translate(11 ${y - 1}) rotate(-90)" text-anchor="middle" stroke="none">${Math.abs(mm)}</text>` : nothing}`;
      })}
      <path d="M1 327.500h16" stroke="#000" stroke-dasharray="3 2" />
    </svg>`;
  }

  private drawing() {
    const handles = [[787, 377], [894, 377], [1000, 377], [787, 447], [1000, 447], [787, 517], [894, 517]];
    return html`<svg class="canvas" height="100%" fill="none" role="img" aria-label="绘图页面">
      <g transform="translate(-50 -157)">
        <path d="M1172 230h6v701H681v-5h491z" fill="#c4c4c4" />
        <rect x="675.500" y="225.500" width="496" height="700" fill="#fff" stroke="#8a8a8a" />
        <rect x="793.500" y="383.500" width="201" height="128" stroke="#222" />
        ${handles.map(([x, y]) => svg`<rect x=${x - 4} y=${y - 4} width="8" height="8" fill="#000"/>`)}
        ${[[793.5, 383.5], [994.5, 383.5], [793.5, 511.5]].map(([x, y]) => svg`<circle cx=${x} cy=${y} r="1.800" fill="#fff" stroke="#222"/>`)}
        <path d="m891.500 444.500 5 5M896.500 444.500l-5 5" stroke="#222" stroke-width="1.200" />
      </g>
    </svg>`;
  }

  private noColor(w: number, color = "#f33") {
    return html`<svg width=${w} height=${w} viewBox="0 0 16 16" aria-hidden="true"><path d="m2 14 12-12" stroke=${color} stroke-width="1.200" /></svg>`;
  }

  private palette(label: string, drop: string, colors: string[]) {
    return html`<aside class="pal" aria-label=${label}>
      <span class="dots flat"></span>
      <button class="h16" aria-label="菜单">${icons.play}</button>
      <button class="h24" aria-label="滴管">${icons[drop]}</button>
      <button class="h15" aria-label="向上滚动">${icons.chevUp}</button>
      <button class="none" aria-label="无填充">${this.noColor(16)}</button>
      <div class="list">${colors.map((c) => html`<button aria-label=${c} style=${styleMap({ background: c })}></button>`)}</div>
      <button class=${classMap({ h15: true, pale: !colors.length })} aria-label="向下滚动">${icons.chevDown}</button>
      <button class="h20" aria-label="展开">${icons.more}</button>
    </aside>`;
  }

  private contextMenu() {
    return html`<div class="menu" role="menu">
      ${contextItems.map((it) => {
        if (it === "-") return html`<div class="msep" role="separator"></div>`;
        const cls = { hot: it.state === "hot", off: it.state === "off", dim: it.state === "dim", held: it.state === "boxed" };
        return html`<button role="menuitem" class=${classMap(cls)} ?disabled=${it.state === "off"}>
          <span class="pic">${it.icon ? icons[it.icon] : nothing}</span><span class="cap">${caption(it.text)}</span><span class="cap">${it.key ? caption(it.key) : nothing}</span><span class="sub">${it.sub ? icons.play : nothing}</span>
        </button>`;
      })}
    </div>`;
  }

  private shadowFilter = svg`<filter id="soft" x="-30%" y="-50%" width="180%" height="250%"><feDropShadow dx="2" dy="3" stdDeviation="2" flood-color="#000" flood-opacity=".5"/></filter>`;

  render() {
    return html`<div class="app">
      <header class="title">
        <svg width="16" height="16" viewBox="0 0 16 16" aria-hidden="true"><rect width="16" height="16" rx="3" fill="#2fb52b" /><path d="M5 16 16 6v7a3 3 0 0 1-3 3z" fill="#169a1e" /><path d="m4 4 8 8" stroke="#fff" stroke-width="3" stroke-linecap="round" /><path d="m3 3 3 1-2 2z" fill="#d7f5d0" /></svg>
        <h1>${caption("CorelDRAW 2020 (64-Bit 试用期限到期) - 未命名 -1*")}</h1>
        <div class="winbtns"><button class="lone" aria-label="账户">${icons.account}</button><button class="lone" aria-label="最小化">${icons.minimize}</button><button aria-label="还原">${icons.restore}</button><button aria-label="关闭">${icons.close}</button></div>
      </header>
      <nav class="menubar">${menus.map((m) => html`<button><span>${caption(m)}</span></button>`)}</nav>
      ${this.mainBar()} ${this.propertyBar()}
      <main class="body">
        <div class="toolbox" role="toolbar" aria-label="工具箱">
          ${tools.map((t) =>
            t === "-"
              ? html`<span class="hsep"></span>`
              : html`<button class=${classMap({ ib: true, boxed: !!t.on })} aria-label=${t.label}>${t.icon === "text" ? html`<span class="glyph">字</span>` : icons[t.icon]}${t.fly ? flyout : nothing}</button>`
          )}
          <button class="add" aria-label="添加工具">${icons.plus}</button>
        </div>
        <section class="doc">
          <div class="tabs">
            <button class="tab first">${icons.home}<span>${caption("欢迎屏幕")}</span></button>
            <button class="tab current"><span>${caption("未命名 -1*")}</span></button>
            <button class="tab more" aria-label="新建文档">${icons.plus}</button>
          </div>
          <div class="hrow"><span class="origin">${icons.rulerOrigin}</span>${this.hRuler()}</div>
          <div class="below">
            <div class="vruler">${this.vRuler()}</div>
            <div class="work">
              <div class="view">
                ${this.drawing()}
                <div class="vscroll">
                  <button class="sbtn" aria-label="上滚">${icons.scrollUp}</button>
                  <div class="track"><span class="s180"></span><span class="thumb"></span><span class="s195"></span></div>
                  <button class="sbtn" aria-label="下滚">${icons.scrollDown}</button>
                </div>
              </div>
              <div class="pages">
                <div class="pagenav">
                  <button aria-label="在前面添加页">${icons.addPage}</button><button aria-label="首页">${icons.first}</button><button aria-label="上一页">${icons.prev}</button>
                  <span class="count"><span>1</span><span class="cjk">的</span><span>1</span></span>
                  <button aria-label="下一页">${icons.next}</button><button aria-label="末页">${icons.last}</button><button aria-label="在后面添加页">${icons.addPage}</button>
                  <button class="ptab"><svg width="47" height="17" viewBox="0 0 47 17" aria-hidden="true"><path d="M0 0h47l-5 16H5z" fill="#fff" /><path d="M.5 0 5 16.500h37L46.500 0" fill="none" stroke="#777" /></svg><span>${caption("页 1")}</span></button>
                </div>
                <div class="hscroll"><button class="sbtn" aria-label="左滚">${icons.scrollLeft}</button><span class="hthumb"></span><button class="sbtn" aria-label="右滚">${icons.scrollRight}</button></div>
                <button class="navzoom" aria-label="导航器">${icons.navigator}</button>
              </div>
            </div>
          </div>
          <div class="docpal">
            <span class="dots"></span><button class="slim" aria-label="文档调色板菜单">${icons.play}</button><button class="wider" aria-label="滴管">${icons.dropperSmall}</button><button class="slim" aria-label="向左">${icons.leftPale}</button>
            <button class="none" aria-label="无颜色">${this.noColor(16)}</button>
            <span class="hint">${caption("将颜色(或对象)拖动至此处，以便将这些颜色与文档存储在一起")}</span>
            <button aria-label="向右">${icons.rightPale}</button><button aria-label="更多">${icons.more}</button>
          </div>
        </section>
        ${this.palette("默认调色板", "dropperPale", swatches)} ${this.palette("文档颜色", "dropper", [])}
      </main>
      <footer class="status">
        ${this.btn("gear", "状态栏选项", "", true)}
        <p class="hintline">${caption("双击工具可创建页面框架；按住 Ctrl 键拖动可限制为方形；按住 Shift 键拖动可从中心绘制")}</p>
        <span>${caption("矩形 于 图层 1")}</span><span class="push"></span>
        <div class="stat fillstat">${icons.bucket}<span class="chip">${this.noColor(20, "#d11")}</span><span>${caption("无")}</span></div>
        <div class="stat penstat">${icons.pen}<span class="chip k"></span><span class="cmyk">${inks.map(([n, v]) => html`<span class="ink"><span>${n}</span><span>${v}</span></span>`)}</span></div>
        ${icons.proof}
      </footer>
      ${this.contextMenu()}
      <div class="ime"><span>EN</span><svg width="12" height="12" viewBox="0 0 12 12" aria-hidden="true"><path d="M6 1c4 2 5 7 0 9.500H1C6 9 7 5 6 1z" fill="none" stroke="#444" stroke-width="1.200" /></svg>${caption("简")}</div>
      <svg class="over cursor" width="13" height="20" viewBox="0 0 13 20" aria-hidden="true"><path d="M.5.5v16l3.700-3.500 2.300 5.500 2.500-1L6.700 12H12z" fill="#fff" stroke="#223" /></svg>
      <svg class="over arrow1" width="60" height="84" viewBox="0 0 60 84" aria-hidden="true">${this.shadowFilter}<g filter="url(#soft)"><path d="M7 71 32 26l-5-1L45 6l-7 26-4-3L10 72z" fill="#f00" stroke="#a33" stroke-width=".7" /></g></svg>
      <svg class="over arrow2" width="104" height="32" viewBox="0 0 104 32" aria-hidden="true">${this.shadowFilter}<g filter="url(#soft)"><path d="M6 13h65l-3-5 26 6-26 7 3-5H6z" fill="#f00" stroke="#a33" stroke-width=".7" /></g></svg>
      <div class="over mark">
        <svg width="44" height="44" viewBox="0 0 44 44" aria-hidden="true"><path d="M42 1C20 0 0 14 1 27c1 5 5 8 10 9-5-8 2-24 31-35z" fill="#3d8fdc" /><path d="M12 19c8-8 24-6 28 2 2 10-10 20-29 22 13-5 22-13 18-20-3-5-10-6-17-4z" fill="#62bf6b" /><path d="M29 20c-8-4-18 2-16 8 2 5 10 4 12 0-4 2-8 0-7-3s6-6 11-5z" fill="#3d8fdc" /></svg>
        <div><p>极光下载站</p><p>www.xz7.com</p></div>
      </div>
    </div>`;
  }
}
